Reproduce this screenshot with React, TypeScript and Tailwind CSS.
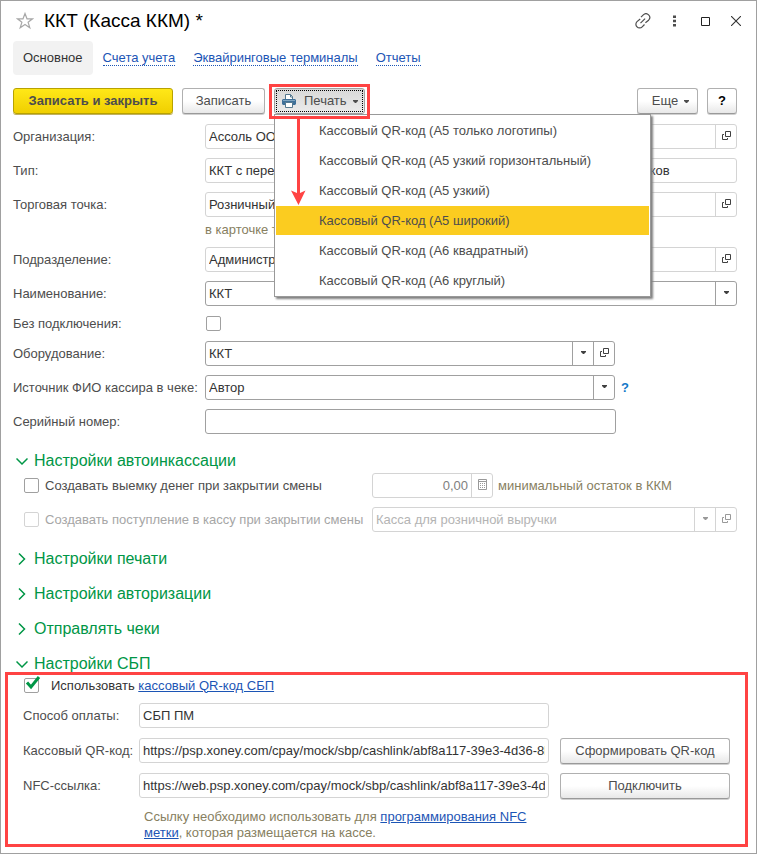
import React from 'react';
import { clsx } from 'clsx';

type IconName = 'open' | 'down' | 'calc';

interface FieldProps {
    id: string;
    value: string;
    label?: string;
    className?: string;
    muted?: boolean;
    disabled?: boolean;
    alignRight?: boolean;
    icons?: IconName[];
}

interface RowProps {
    id: string;
    label: string;
    children: React.ReactNode;
}

interface SectionTitleProps {
    text: string;
    open?: boolean;
    className?: string;
}

const iconLabels: Record<IconName, string> = {
    open: 'Открыть',
    down: 'Выбрать',
    calc: 'Калькулятор'
};

const printForms = [
    'Кассовый QR-код (А5 только логотипы)',
    'Кассовый QR-код (А5 узкий горизонтальный)',
    'Кассовый QR-код (А5 узкий)',
    'Кассовый QR-код (А5 широкий)',
    'Кассовый QR-код (А6 квадратный)',
    'Кассовый QR-код (А6 круглый)'
];

const Arrow: React.FC = () => (
    <svg width="5" height="3" viewBox="0 0 5 3" fill="currentColor" aria-hidden="true">
        <path d="M0 0h5v1L3 3H2L0 1z" />
    </svg>
);

const FieldIcon: React.FC<{ name: IconName }> = ({ name }) => {
    if (name === 'down') return <Arrow />;
    if (name === 'calc') {
        return (
            <svg width="9" height="11" viewBox="0 0 9 11" fill="none" stroke="currentColor" aria-hidden="true">
                <path d="M.5.5h8v10h-8zM0 2.5h9" />
                <path d="M2 4.5h1m1 0h1m1 0h1M2 6.5h1m1 0h1m1 0h1M2 8.5h1m1 0h1m1 0h1" />
            </svg>
        );
    }
    return (
        <svg width="9" height="9" viewBox="0 0 9 9" fill="none" stroke="currentColor" aria-hidden="true">
            <path d="M3.5.5h5v5h-5zM2 3.5H.5v5h5V7" />
        </svg>
    );
};

const Field: React.FC<FieldProps> = ({ id, value, label, className, muted, disabled, alignRight, icons = [] }) => {
    const border = muted ? 'border-[#d4d4d4]' : 'border-[#a0a0a0]';
    return (
        <div className={clsx('flex h-[25px] min-w-0 rounded-[3px] border bg-white', border, className)}>
            <input
                id={id}
                type="text"
                defaultValue={value}
                aria-label={label}
                disabled={disabled}
                className={clsx(
                    'min-w-0 flex-1 bg-transparent px-[3px] outline-none',
                    disabled ? 'text-[#b4b4b4]' : alignRight ? 'text-[#808080]' : 'text-[#333333]',
                    alignRight && 'text-right'
                )}
            />
            {icons.map((name) => (
                <button
                    key={name}
                    type="button"
                    aria-label={iconLabels[name]}
                    disabled={disabled}
                    className={clsx(
                        'flex w-[21px] shrink-0 items-center justify-center border-l pb-[2px]',
                        border,
                        disabled || name === 'calc' ? 'text-[#999999]' : 'text-[#404040]'
                    )}
                >
                    <FieldIcon name={name} />
                </button>
            ))}
        </div>
    );
};

const Row: React.FC<RowProps> = ({ id, label, children }) => (
    <div className="flex items-start">
        <label htmlFor={id} className="w-48 shrink-0 leading-[25px]">{label}</label>
        {children}
    </div>
);

const CheckBox: React.FC<{ id: string; disabled?: boolean; checked?: boolean }> = ({ id, disabled, checked }) => (
    <span className="relative flex">
        <input
            id={id}
            type="checkbox"
            defaultChecked={checked}
            disabled={disabled}
            className={clsx('h-[15px] w-[15px] appearance-none rounded-[2px] border bg-white', disabled ? 'border-[#d4d4d4]' : 'border-[#a0a0a0]')}
        />
        {checked && (
            <svg className="pointer-events-none absolute left-0 -top-1" width="17" height="17" viewBox="0 0 17 17" fill="none" stroke="#009646" strokeWidth="3" aria-hidden="true">
                <path d="M3 8.5l4 4.5L15 3" />
            </svg>
        )}
    </span>
);

const SectionTitle: React.FC<SectionTitleProps> = ({ text, open, className }) => (
    <button type="button" aria-expanded={!!open} className={clsx('flex h-[19px] items-center text-base leading-[19px] text-[#009646]', className)}>
        <span className="flex w-[21px] pl-[3px]">
            <svg width="12" height="12" viewBox="0 0 12 12" fill="none" stroke="currentColor" strokeWidth="1.5" aria-hidden="true">
                <path d={open ? 'M.5 3.5L6 9l5.5-5.5' : 'M3 .5L8.5 6 3 11.5'} />
            </svg>
        </span>
        {text}
    </button>
);

const grayButton = 'flex h-[26px] items-center justify-center rounded-[3px] border border-[#b0b0b0] border-b-[#999999] bg-linear-to-b from-white from-50% to-[#e8e8e8] text-[#4d4d4d] shadow-[0_1px_0_#d0d0d0]';

const PrintMenu: React.FC = () => (
    <div className="relative ml-[9px]">
        <button type="button" aria-haspopup="menu" aria-expanded="true" className="flex h-[26px] w-[91px] rounded-[3px] border border-[#a0a0a0] bg-linear-to-b from-[#d8d8d8] to-[#ececec] p-px text-[#4d4d4d]">
            <span className="flex h-full w-full items-center border border-dotted border-black pl-[5px]">
                <svg width="14" height="14" viewBox="0 0 14 14" aria-hidden="true">
                    <path d="M3.5 5V.5h5l2 2V5" fill="#fff" stroke="#56798f" />
                    <path d="M8.5.5V3h2" fill="none" stroke="#56798f" />
                    <path d="M1 5h12l1 1v4l-1 1H1l-1-1V6z" fill="#3f7099" />
                    <path d="M1 6.5h12" stroke="#7fa5c0" />
                    <path d="M3.5 8.5h7v5h-7z" fill="#fff" stroke="#56798f" />
                </svg>
                <span className="ml-2 mr-[6px]">Печать</span>
                <Arrow />
            </span>
        </button>
        <ul role="menu" className="absolute left-0 top-[26px] z-10 flex w-[377px] flex-col gap-px border border-[#999999] bg-white p-px shadow-[2px_2px_2px_#808080]">
            {printForms.map((form, index) => (
                <li key={form} role="none">
                    <button type="button" role="menuitem" className={clsx('flex h-[29px] w-full items-center pl-[43px] text-[#4d4d4d]', index === 3 && 'bg-[#fbcc20]')}>
                        {form}
                    </button>
                </li>
            ))}
        </ul>
        {/* red frame and pointer to the chosen print form */}
        <div className="pointer-events-none absolute -left-[5px] -top-1 z-20 h-[35px] w-[101px] border-[3px] border-[#ff4343]" />
        <svg className="pointer-events-none absolute left-4 top-[30px] z-20" width="17" height="88" viewBox="0 0 17 88" fill="#ff4343" aria-hidden="true">
            <path d="M7 0h3v75l5.5-2.5L8.5 87 1 72.5 7 75z" />
        </svg>
    </div>
);

const App: React.FC = () => {
    return (
        <div className="flex min-h-screen flex-col border border-[#a0a0a0] bg-white pb-[6px] pl-3 pr-[19px] font-['Liberation_Sans',Arial,sans-serif] text-[13px] leading-4 text-[#4d4d4d]">
            <header className="-mr-1 flex h-10 items-center">
                <button type="button" aria-label="В избранное" className="ml-[3px]">
                    <svg width="18" height="18" viewBox="0 0 18 18" fill="none" stroke="#a8a8a8" strokeWidth="1.2" aria-hidden="true">
                        <path d="M9 1.5l2 5.3h5.5l-4.4 3.4 1.7 5.6L9 12.5l-4.8 3.3 1.7-5.6L1.5 6.8H7z" />
                    </svg>
                </button>
                <h1 className="ml-[10px] text-[19px] text-black">ККТ (Касса ККМ) *</h1>
                <div className="ml-auto flex items-center text-[#4d4d4d]">
                    <button type="button" aria-label="Получить ссылку">
                        <svg width="16" height="16" viewBox="0 0 16 16" fill="none" stroke="currentColor" strokeWidth="1.2" aria-hidden="true">
                            <path d="M6 4.2l2.3-2.3a3.8 3.8 0 0 1 5.3 0 3.8 3.8 0 0 1 0 5.3l-3.2 2.6" />
                            <path d="M9.5 11.5l-2.3 2.3a3.6 3.6 0 0 1-5.2 0 3.6 3.6 0 0 1 0-5.2l3.2-2.6" />
                            <path d="M5.5 10.2l4.6-4.6" />
                        </svg>
                    </button>
                    <button type="button" aria-label="Меню" className="ml-[22px]">
                        <svg width="3" height="12" viewBox="0 0 3 12" fill="currentColor" aria-hidden="true">
                            <path d="M0 .5h3V3H0zM0 4.800h3v2.500H0zM0 9h3v2.500H0z" />
                        </svg>
                    </button>
                    <button type="button" aria-label="Развернуть" className="ml-[25px]">
                        <svg width="9" height="9" viewBox="0 0 9 9" fill="none" stroke="#222222" aria-hidden="true">
                            <path d="M.5.5h8v8h-8z" />
                        </svg>
                    </button>
                    <button type="button" aria-label="Закрыть" className="ml-[21px]">
                        <svg width="10" height="10" viewBox="0 0 10 10" fill="none" stroke="#333333" strokeWidth="1.1" aria-hidden="true">
                            <path d="M0 0l10 10M10 0L0 10" />
                        </svg>
                    </button>
                </div>
            </header>

            <nav className="flex items-center gap-[18px] text-[#1c55b5]">
                <a href="#main" className="-mr-2 rounded bg-[#f2f2f2] px-[10px] py-[9px] text-[#333333]">Основное</a>
                <a href="#accounts" className="border-b border-dotted border-[#1c55b5] leading-[14px]">Счета учета</a>
                <a href="#terminals" className="border-b border-dotted border-[#1c55b5] leading-[14px]">Эквайринговые терминалы</a>
                <a href="#reports" className="border-b border-dotted border-[#1c55b5] leading-[14px]">Отчеты</a>
            </nav>

            <div className="mt-[13px] flex">
                <button type="button" className="h-[26px] w-40 rounded-[3px] border border-[#b8a200] bg-linear-to-b from-[#ffe817] to-[#f0cf00] font-bold text-[#4d4d4d] shadow-[0_1px_0_#c0b060]">Записать и закрыть</button>
                <button type="button" className={clsx(grayButton, 'ml-[9px] w-[83px]')}>Записать</button>
                <PrintMenu />
                <button type="button" className={clsx(grayButton, 'ml-auto w-[61px] gap-[6px] pl-[6px]')}>Еще <Arrow /></button>
                <button type="button" aria-label="Справка" className={clsx(grayButton, 'ml-[9px] w-[30px] font-bold text-black')}>?</button>
            </div>

            <form className="mt-[10px] flex flex-col">
                <div className="flex flex-col gap-[9px]">
                    <Row id="org" label="Организация:">
                        <Field id="org" value="Ассоль ООО" className="flex-1" muted icons={['open']} />
                    </Row>
                    <Row id="type" label="Тип:">
                        <Field id="type" value="ККТ с передачей данных через операторов и поддержкой кассовых бланков" className="flex-1" muted />
                    </Row>
                    <Row id="shop" label="Торговая точка:">
                        <div className="flex min-w-0 flex-1 flex-col">
                            <Field id="shop" value="Розничный магазин" muted icons={['open']} />
                            <p className="mt-[5px] text-[#87805f]">в карточке торговой точки</p>
                        </div>
                    </Row>
                    <Row id="dept" label="Подразделение:">
                        <Field id="dept" value="Администрация" className="flex-1" muted icons={['open']} />
                    </Row>
                    <Row id="name" label="Наименование:">
                        <Field id="name" value="ККТ" className="flex-1" icons={['down']} />
                    </Row>
                    <div className="flex h-[17px] items-center">
                        <label htmlFor="offline" className="w-[193px] shrink-0">Без подключения:</label>
                        <CheckBox id="offline" />
                    </div>
                    <Row id="device" label="Оборудование:">
                        <Field id="device" value="ККТ" className="w-[410px]" icons={['down', 'open']} />
                    </Row>
                    <Row id="source" label="Источник ФИО кассира в чеке:">
                        <div className="flex h-[25px] w-[410px] min-w-0 rounded-[3px] border border-[#a0a0a0]">
                            <select id="source" defaultValue="Автор" className="min-w-0 flex-1 appearance-none bg-transparent px-[3px] text-[#333333] outline-none">
                                <option>Автор</option>
                            </select>
                            <span className="pointer-events-none flex w-[21px] items-center justify-center border-l border-[#a0a0a0] pb-[2px] text-[#404040]">
                                <Arrow />
                            </span>
                        </div>
                        <button type="button" aria-label="Подсказка" className="ml-[6px] font-bold leading-[25px] text-[#1478c8]">?</button>
                    </Row>
                    <Row id="serial" label="Серийный номер:">
                        <Field id="serial" value="" className="w-[411px]" />
                    </Row>
                </div>

                <SectionTitle text="Настройки автоинкассации" open className="mt-[17px]" />
                <div className="mt-[3px] flex flex-col gap-[9px] pl-[11px]">
                    <div className="flex items-center">
                        <div className="flex w-[348px] shrink-0 items-center gap-[6px]">
                            <CheckBox id="withdraw" />
                            <label htmlFor="withdraw">Создавать выемку денег при закрытии смены</label>
                        </div>
                        <Field id="rest" value="0,00" className="w-[121px]" muted alignRight icons={['calc']} />
                        <label htmlFor="rest" className="ml-[5px] text-[#87805f]">минимальный остаток в ККМ</label>
                    </div>
                    <div className="flex items-center">
                        <div className="flex w-[348px] shrink-0 items-center gap-[6px] text-[#a6a6a6]">
                            <CheckBox id="deposit" disabled />
                            <label htmlFor="deposit">Создавать поступление в кассу при закрытии смены</label>
                        </div>
                        <Field id="cashbox" label="Касса" value="Касса для розничной выручки" className="flex-1" muted disabled icons={['down', 'open']} />
                    </div>
                </div>

                <div className="mt-[17px] flex flex-col items-start gap-4">
                    <SectionTitle text="Настройки печати" />
                    <SectionTitle text="Настройки авторизации" />
                    <SectionTitle text="Отправлять чеки" />
                    <SectionTitle text="Настройки СБП" open />
                </div>

                <div className="-ml-2 -mr-[11px] -mt-px border-[3px] border-[#ff4343] px-[15px] pb-[3px]">
                    <div className="flex h-[21px] items-center pl-px">
                        <CheckBox id="sbp" checked />
                        <label htmlFor="sbp" className="ml-3 text-[#333333]">
                            Использовать <a href="#sbp-qr" className="text-[#1c55b5] underline">кассовый QR-код СБП</a>
                        </label>
                    </div>
                    <div className="mt-[7px] grid grid-cols-[116px_minmax(0,1fr)_170px] gap-y-[9px]">
                        <label htmlFor="payment" className="leading-[25px]">Способ оплаты:</label>
                        <Field id="payment" value="СБП ПМ" className="mr-[11px]" muted />
                        <span className="h-[26px]" />
                        <label htmlFor="qr" className="leading-[25px]">Кассовый QR-код:</label>
                        <Field id="qr" value="https://psp.xoney.com/cpay/mock/sbp/cashlink/abf8a117-39e3-4d36-8b1c" className="mr-[11px]" muted />
                        <button type="button" className={grayButton}>Сформировать QR-код</button>
                        <label htmlFor="nfc" className="leading-[25px]">NFC-ссылка:</label>
                        <Field id="nfc" value="https://web.psp.xoney.com/cpay/mock/sbp/cashlink/abf8a117-39e3-4d36-8b1c" className="mr-[11px]" muted />
                        <button type="button" className={grayButton}>Подключить</button>
                    </div>
                    <p className="ml-[121px] mt-[10px] max-w-[400px] text-[#87805f]">
                        Ссылку необходимо использовать для <a href="#nfc-help" className="text-[#1c55b5] underline">программирования NFC метки</a>, которая размещается на кассе.
                    </p>
                </div>
            </form>
        </div>
    );
};

export default App;
